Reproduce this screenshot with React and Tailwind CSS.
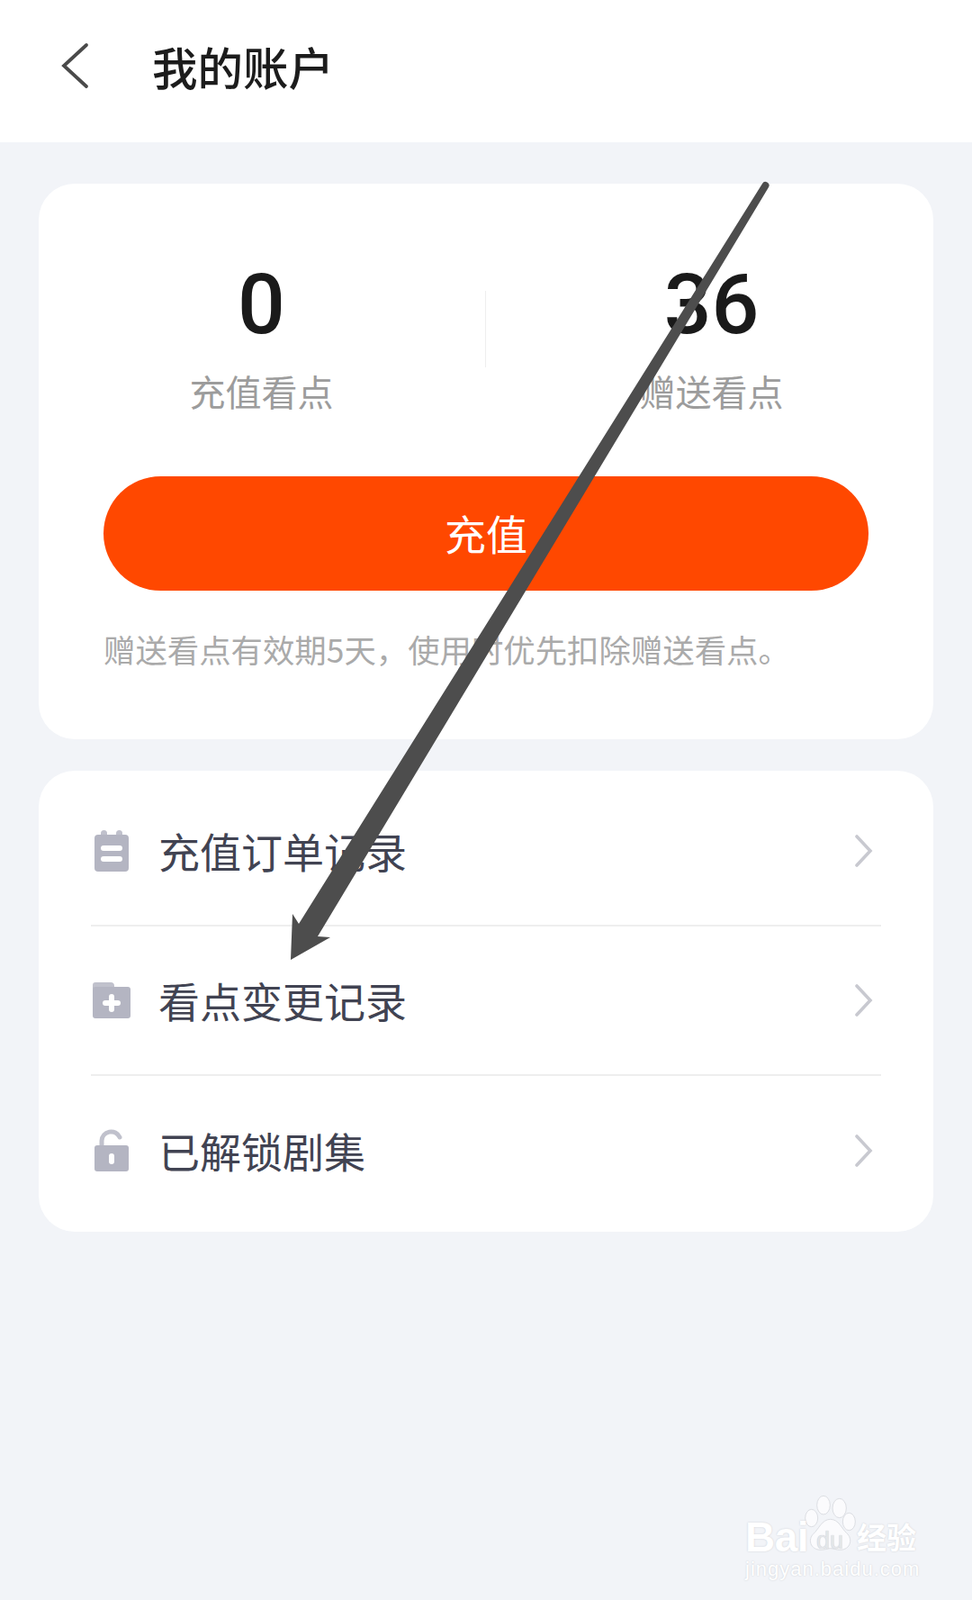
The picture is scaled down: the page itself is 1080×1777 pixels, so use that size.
import React from 'react';

const BackIcon = () => (
    <svg width="32" height="52" viewBox="0 0 32 52" fill="none">
        <path d="M29 3 L4 26 L29 49" stroke="#4a4a4a" strokeWidth="3.8" strokeLinecap="round" strokeLinejoin="miter" />
    </svg>
);

const ChevronIcon = () => (
    <svg width="22" height="36" viewBox="0 0 22 36" fill="none">
        <path d="M4 2 L19 18 L4 34" stroke="#c8c9d0" strokeWidth="3.6" strokeLinecap="round" />
    </svg>
);

const OrderIcon = () => (
    <svg width="38" height="46" viewBox="0 0 38 46">
        <rect x="7" y="0" width="7" height="10" rx="3.5" fill="#c0c1cc" />
        <rect x="24" y="0" width="7" height="10" rx="3.5" fill="#c0c1cc" />
        <rect x="0" y="5" width="38" height="41" rx="4" fill="#b4b5c2" />
        <rect x="7" y="17" width="24" height="6" rx="3" fill="#fff" />
        <rect x="7" y="29" width="24" height="6" rx="3" fill="#fff" />
    </svg>
);

const FolderIcon = () => (
    <svg width="44" height="42" viewBox="0 0 44 42">
        <path d="M1 4 a3 3 0 0 1 3 -3 h17 a4 4 0 0 1 4 4 v3 h-24z" fill="#c0c1cc" />
        <path d="M1 9 a3 3 0 0 1 3 -3 h36 a3 3 0 0 1 3 3 v29 a3 3 0 0 1 -3 3 h-36 a3 3 0 0 1 -3 -3z" fill="#b4b5c2" />
        <rect x="12" y="21" width="20" height="6" rx="3" fill="#fff" />
        <rect x="19" y="14" width="6" height="20" rx="3" fill="#fff" />
    </svg>
);

const LockIcon = () => (
    <svg width="40" height="48" viewBox="0 0 40 48">
        <path d="M9 20 v-7 a10.5 10.5 0 0 1 20 -4" fill="none" stroke="#c0c1cc" strokeWidth="5" strokeLinecap="round" />
        <rect x="1" y="18" width="38" height="29" rx="3" fill="#b4b5c2" />
        <rect x="17" y="27" width="6" height="12" rx="3" fill="#fff" />
    </svg>
);

const rows = [
    { icon: <OrderIcon />, label: '充值订单记录' },
    { icon: <FolderIcon />, label: '看点变更记录' },
    { icon: <LockIcon />, label: '已解锁剧集' },
];

const Watermark = () => (
    <div className="absolute left-[780px] top-[1620px] w-[300px] h-[157px] text-white [text-shadow:0_0_2px_#c9cbd0] font-['Liberation_Sans',sans-serif]">
        <svg className="absolute left-0 top-0" width="300" height="157" viewBox="0 0 900 471" fill="#fbfbfd" stroke="#dcdee3" strokeWidth="3">
            <ellipse cx="405" cy="155" rx="22" ry="31" />
            <ellipse cx="458" cy="165" rx="23" ry="32" />
            <ellipse cx="365" cy="198" rx="21" ry="29" />
            <ellipse cx="490" cy="210" rx="21" ry="29" />
            <path d="M428 202 c28 0 38 32 54 46 c22 18 14 56 -22 56 c-14 0 -20 -5 -32 -5 c-12 0 -18 5 -32 5 c-36 0 -44 -36 -24 -54 c16 -14 28 -48 56 -48z" />
        </svg>
        <span className="absolute left-[48px] top-[62px] text-[46px] leading-[50px] font-bold tracking-[-0.5px]">Bai</span>
        <span className="absolute left-[127px] top-[76px] text-[27px] leading-[30px] text-[#e4e6ea] [text-shadow:0_0_1px_#b9bcc3]">du</span>
        <span className="absolute left-[172px] top-[66px] text-[33px] leading-[40px] font-bold font-['Noto_Sans_CJK_SC',sans-serif]">经验</span>
        <span className="absolute left-[48px] top-[110px] text-[22px] leading-[26px] tracking-[1px]">jingyan.baidu.com</span>
    </div>
);

const App = () => {
    return (
        <div className="relative w-full min-h-[1777px] overflow-hidden bg-[#f2f4f8] font-['Noto_Sans_CJK_SC',sans-serif]">
            <header className="flex items-center h-[158px] bg-white pl-[67px] pb-[12px]">
                <BackIcon />
                <h1 className="ml-[70px] text-[50.5px] leading-none font-medium text-[#1c1c1c]">我的账户</h1>
            </header>

            <main className="px-[43px] pt-[46px]">
                <section className="bg-white rounded-[40px] pt-[85px] pb-[73px]">
                    <div className="relative grid grid-cols-2 text-center">
                        <div className="pr-[2px]">
                            <div className="text-[93px] leading-[100px] font-medium text-[#1a1a1a] font-['Roboto',sans-serif]">0</div>
                            <div className="mt-[20px] mb-[3px] text-[40px] leading-[50px] text-[#9c9c9c]">充值看点</div>
                        </div>
                        <div className="pl-[4px]">
                            <div className="text-[93px] leading-[100px] font-medium text-[#1a1a1a] font-['Roboto',sans-serif]">36</div>
                            <div className="mt-[20px] mb-[3px] text-[40px] leading-[50px] text-[#9c9c9c]">赠送看点</div>
                        </div>
                        <div className="absolute left-[496px] top-[34px] w-px h-[85px] bg-[#eeeeee]" />
                    </div>
                    <div className="mx-[72px] mt-[67px]">
                        <button className="w-full h-[127px] rounded-full bg-[#ff4800] text-white text-[46px] pb-[2px]">充值</button>
                        <p className="mt-[40px] mb-[2px] text-[35.4px] leading-[50px] whitespace-nowrap text-[#aaaaaa]">赠送看点有效期5天，使用时优先扣除赠送看点。</p>
                    </div>
                </section>

                <section className="mt-[35px] bg-white rounded-[40px] px-[58px] pt-[7px] pb-[7px]">
                    {rows.map((row, i) => (
                        <div key={row.label} className={`flex items-center h-[166px] ${i < 2 ? 'border-b-2 border-[#eeeeee]' : ''}`}>
                            <div className="flex justify-center w-[46px] shrink-0">{row.icon}</div>
                            <span className="ml-[29px] flex-1 pb-[3px] text-[46px] leading-none text-[#414352]">{row.label}</span>
                            <div className="mr-[9px]"><ChevronIcon /></div>
                        </div>
                    ))}
                </section>
            </main>

            {/* annotation arrow drawn on top of the screenshot */}
            <svg className="absolute left-0 top-0 pointer-events-none" width="1080" height="1777" viewBox="0 0 1080 1777">
                <path d="M847 204 a4 4 0 0 1 7 4 L353 1040 L367 1041 L323 1066 L325 1015 L332 1026z" fill="#4d4d4d" />
            </svg>

            <Watermark />
        </div>
    );
};

export default App;
